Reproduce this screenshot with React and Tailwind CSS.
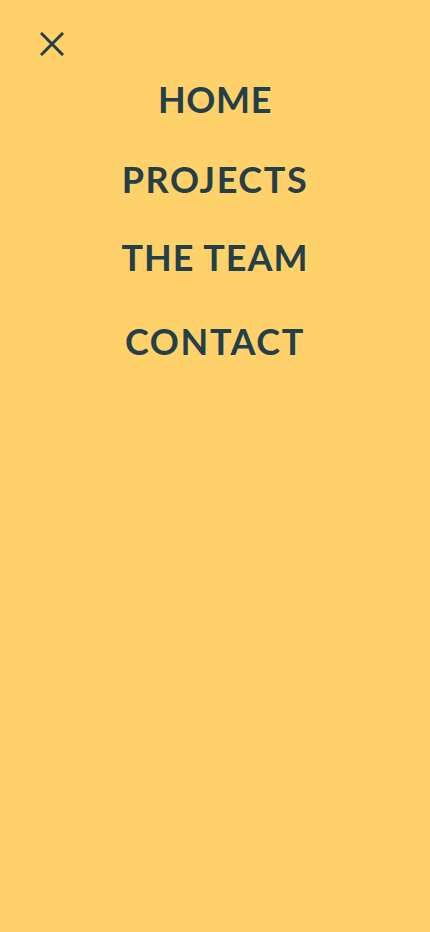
export default function App() {
  const links = [
    { label: 'HOME', mt: 'mt-[23px]', track: 'tracking-[0.6px]' },
    { label: 'PROJECTS', mt: 'mt-[40px]', track: 'tracking-[1.6px]' },
    { label: 'THE TEAM', mt: 'mt-[38px]', track: 'tracking-[1px]' },
    { label: 'CONTACT', mt: 'mt-[44px]', track: 'tracking-[1.6px]' },
  ]

  return (
    <div className="min-h-[932px] w-full bg-[#fed16b] text-[#243f48]" style={{ fontFamily: 'Lato, "Open Sans", sans-serif' }}>
      {/* Bouton fermer */}
      <div className="pt-8 pl-10">
        <button className="block w-6 h-6" aria-label="Fermer">
          <svg viewBox="0 0 24 24" width="24" height="24" fill="none" stroke="#243f48" strokeWidth="3" strokeLinecap="square">
            <line x1="2" y1="2" x2="22" y2="22" />
            <line x1="22" y1="2" x2="2" y2="22" />
          </svg>
        </button>
      </div>

      {/* Menu */}
      <nav className="flex flex-col items-center">
        {links.map((link) => (
          <a key={link.label} href="#" className={`${link.mt} ${link.track} block text-4xl font-bold leading-10`}>
            {link.label}
          </a>
        ))}
      </nav>
    </div>
  )
}
